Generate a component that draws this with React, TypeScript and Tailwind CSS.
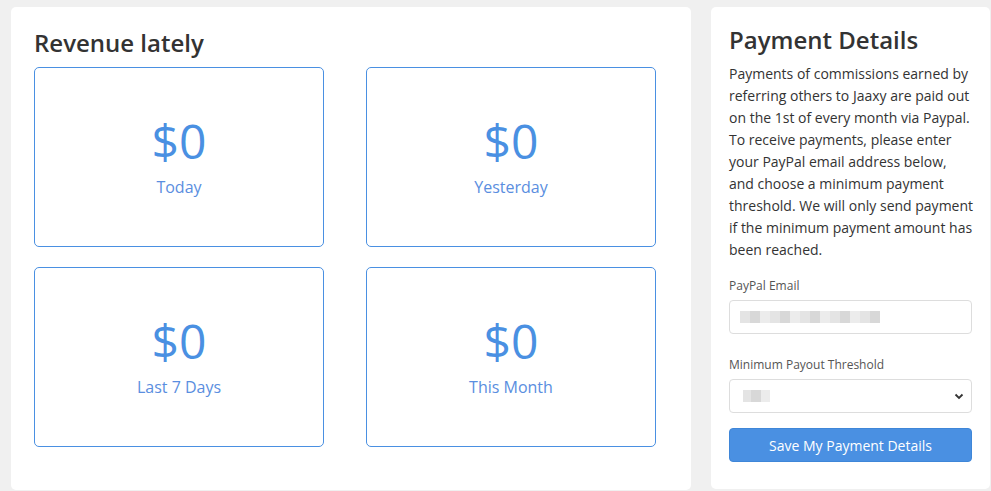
import React from "react";

const cards = [
  { v: "$0", l: "Today" },
  { v: "$0", l: "Yesterday" },
  { v: "$0", l: "Last 7 Days" },
  { v: "$0", l: "This Month" },
];

function Blur({ widths }: { widths: number[] }) {
  return (
    <div className="flex items-center">
      {widths.map((w, i) => (
        <div
          key={i}
          className="h-[12px]"
          style={{ width: w, background: i % 3 === 0 ? "#e4e4e4" : i % 3 === 1 ? "#d8d8d8" : "#ececec" }}
        />
      ))}
    </div>
  );
}

export default function App() {
  return (
    <div
      className="w-[991px] h-[491px] bg-[#f0f0f0] flex pt-[7px] pl-[11px] gap-[20px] overflow-hidden"
      style={{ fontFamily: '"Open Sans", sans-serif' }}
    >
      <div className="w-[680px] h-[483px] bg-white rounded-[5px] pl-[23px] pr-[35px] pt-[21px]">
        <h2 className="text-[24px] leading-[29px] font-semibold text-[#333] mb-[10px]">Revenue lately</h2>
        <div className="grid grid-cols-2 gap-x-[42px] gap-y-[20px] w-[622px]">
          {cards.map((c) => (
            <div
              key={c.l}
              className="h-[180px] border border-[#4a90e2] rounded-[5px] flex flex-col items-center justify-center"
            >
              <div className="text-[48px] leading-[56px] text-[#4a90e2] mt-[-4px]">{c.v}</div>
              <div className="text-[16px] leading-[22px] text-[#5a8ee0] mt-[7px]">{c.l}</div>
            </div>
          ))}
        </div>
      </div>
      <div className="w-[279px] h-[482px] bg-white rounded-[5px] pl-[18px] pr-[18px] pt-[17px]">
        <h2 className="text-[24px] leading-[32px] font-semibold text-[#333] mb-[7px]">Payment Details</h2>
        <p className="text-[14px] leading-[22px] text-[#333] mr-[-3px]">
          Payments of commissions earned by referring others to Jaaxy are paid out on the 1st of every month via Paypal. To receive payments, please enter your PayPal email address below, and choose a minimum payment threshold. We will only send payment if the minimum payment amount has been reached.
        </p>
        <div className="mt-[16px] text-[12px] leading-[18px] text-[#555]">PayPal Email</div>
        <div className="mt-[5px] h-[34px] border border-[#ddd] rounded-[4px] flex items-center pl-[10px]">
          <Blur widths={[10, 10, 10, 10, 10, 10, 10, 10, 10, 10, 10, 10, 10, 10]} />
        </div>
        <div className="mt-[22px] text-[12px] leading-[18px] text-[#555]">Minimum Payout Threshold</div>
        <div className="mt-[5px] h-[34px] border border-[#ddd] rounded-[4px] flex items-center justify-between pl-[13px] pr-[6px]">
          <Blur widths={[8, 10, 9]} />
          <svg width="12" height="12" viewBox="0 0 12 12">
            <path d="M2.5 4.5 L6 8 L9.5 4.5" fill="none" stroke="#333" strokeWidth="1.8" />
          </svg>
        </div>
        <button className="mt-[15px] w-full h-[34px] bg-[#4a90e2] border border-[#3f86d8] rounded-[4px] text-white text-[14px]">
          Save My Payment Details
        </button>
      </div>
    </div>
  );
}
